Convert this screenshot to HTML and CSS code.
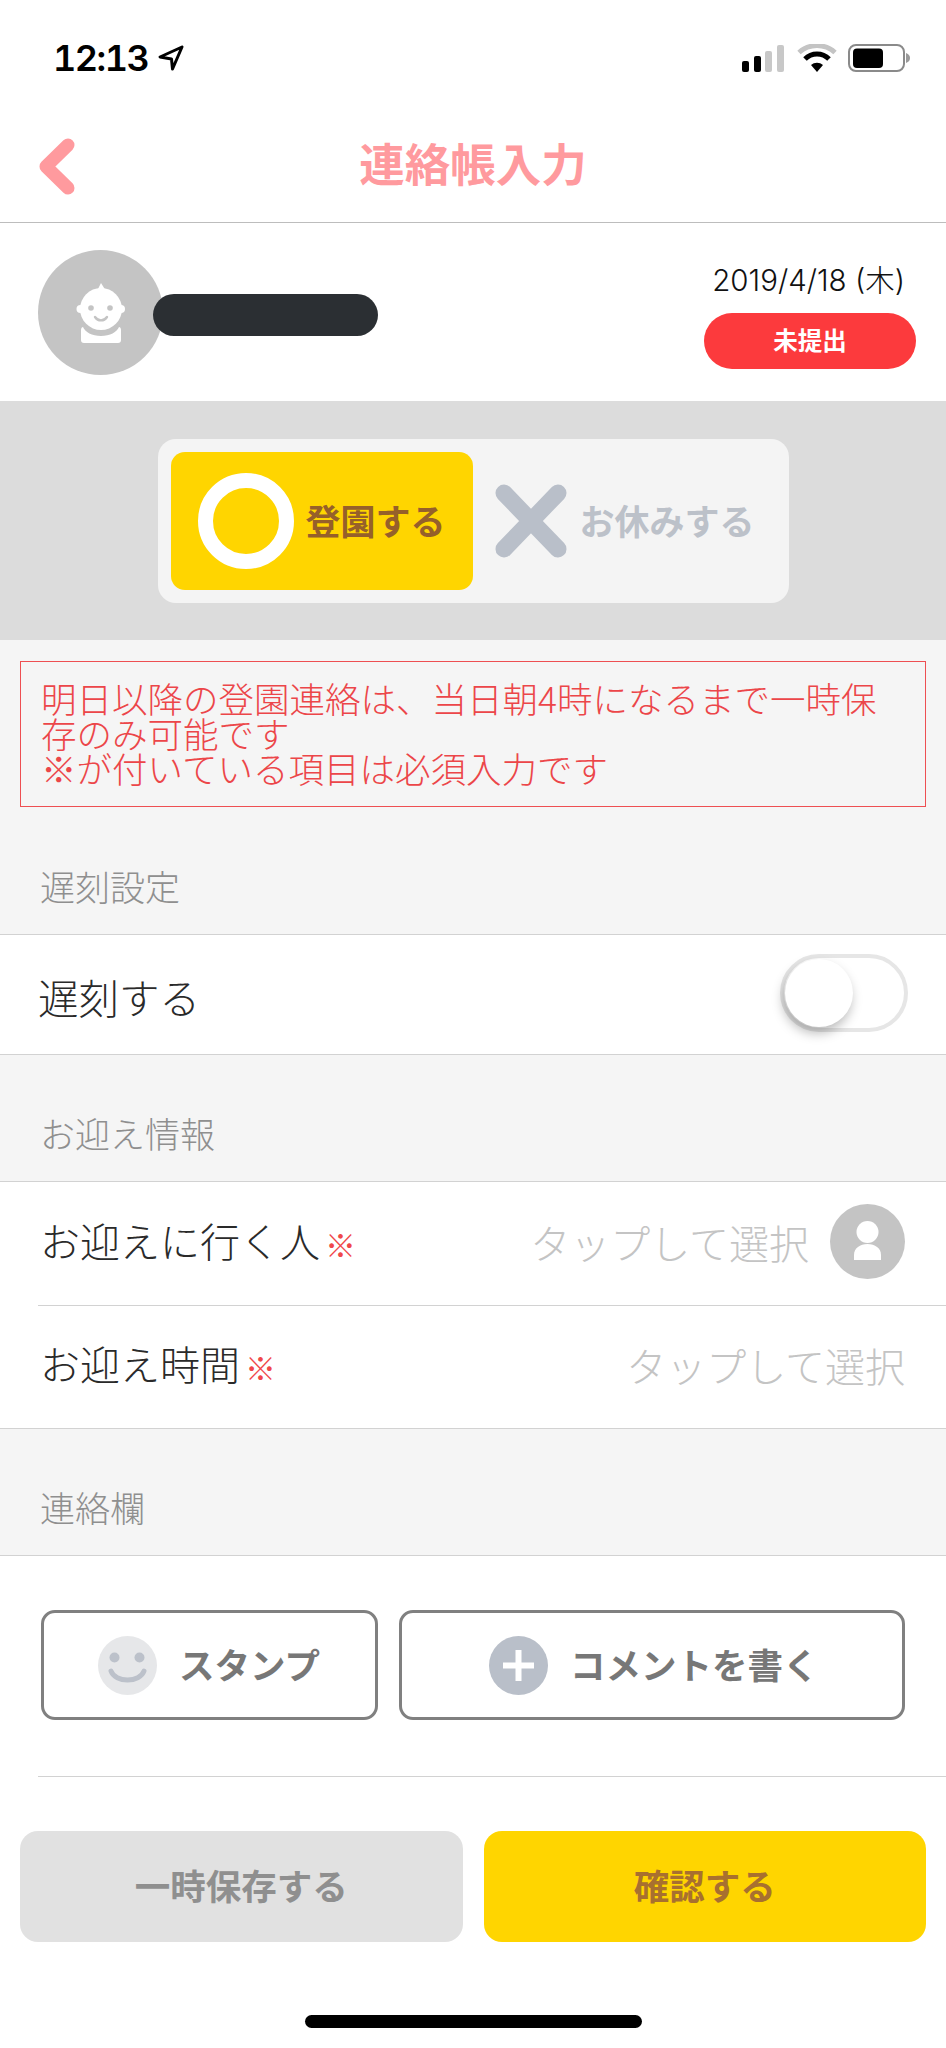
FILE: index.html
```html
<!DOCTYPE html>
<html lang="ja">
<head>
<meta charset="utf-8">
<title>連絡帳入力</title>
<link rel="stylesheet" href="styles.css">
</head>
<body>
<div class="page">
  <div class="status">
    <div class="time-wrap">
      <span class="time">12:13</span>
      <svg class="loc" width="28" height="28" viewBox="0 0 28 28"><path d="M25 3 3 13l11.500 2 1 10z" fill="none" stroke="#000" stroke-width="3" stroke-linejoin="round"/></svg>
    </div>
    <svg class="status-icons" width="170" height="28" viewBox="742 44 170 28">
      <rect x="742" y="61" width="7" height="11" rx="2" fill="#000"/>
      <rect x="754" y="56" width="7" height="16" rx="2" fill="#000"/>
      <rect x="765" y="51" width="7" height="21" rx="2" fill="#c8c8c8"/>
      <rect x="777" y="45" width="7" height="27" rx="2" fill="#c8c8c8"/>
      <path d="M799 52.500a27 27 0 0 1 36 0" fill="none" stroke="#c4c4c4" stroke-width="5"/>
      <path d="M805 59a17 17 0 0 1 24 0" fill="none" stroke="#000" stroke-width="5"/>
      <path d="M811 65a9 9 0 0 1 12 0l-6 7z" fill="#000"/>
      <rect x="849" y="45" width="55" height="26" rx="7" fill="none" stroke="#8a8a8a" stroke-width="2"/>
      <rect x="853" y="48.500" width="30" height="19.500" rx="4" fill="#000"/>
      <path d="M906 53c3 1 4 3 4 5s-1 4-4 5z" fill="#9a9a9a"/>
    </svg>
  </div>
  <header class="nav">
    <svg class="back" width="50" height="72" viewBox="0 0 50 72"><path d="M36 15 14 36.500 36 58" fill="none" stroke="#ff9a9e" stroke-width="13" stroke-linecap="round" stroke-linejoin="round"/></svg>
    <h1 class="nav-title">連絡帳入力</h1>
  </header>
  <section class="profile">
    <div class="avatar">
      <svg width="125" height="125" viewBox="0 0 125 125">
        <circle cx="62.500" cy="62.500" r="62.500" fill="#c4c4c4"/>
        <circle cx="42.500" cy="59" r="4" fill="#fff"/>
        <circle cx="83" cy="59" r="4" fill="#fff"/>
        <path d="M63 33l5 8h-9z" fill="#fff"/>
        <circle cx="63" cy="59" r="21" fill="#fff"/>
        <circle cx="53" cy="58" r="2.800" fill="#c4c4c4"/>
        <circle cx="72" cy="58" r="2.800" fill="#c4c4c4"/>
        <path d="M57 67c3 4.500 9 4.500 12 0" fill="none" stroke="#c4c4c4" stroke-width="2.400" stroke-linecap="round"/>
        <path d="M45 77c2 5 9 9 18 9s16-4 18-9c1 0 2 1 2 3v10c0 2-1 3-3 3H46c-2 0-3-1-3-3V80c0-2 1-3 2-3z" fill="#fff"/>
      </svg>
    </div>
    <div class="name-mask"></div>
    <div class="profile-meta">
      <div class="date">2019/4/18 (木)</div>
      <div class="badge"><span class="badge-text">未提出</span></div>
    </div>
  </section>
  <section class="attend-band">
    <div class="segment">
      <div class="seg-item seg-on">
        <span class="ring"></span>
        <span class="seg-label seg-label-on">登園する</span>
      </div>
      <div class="seg-item seg-off">
        <svg width="74" height="76" viewBox="0 0 74 76"><path d="M10 10l54 56M64 10 10 66" fill="none" stroke="#b9bfc9" stroke-width="17" stroke-linecap="round"/></svg>
        <span class="seg-label seg-label-off">お休みする</span>
      </div>
    </div>
  </section>
  <section class="notice-wrap">
    <div class="notice">明日以降の登園連絡は、当日朝4時になるまで一時保存のみ可能です<br>※が付いている項目は必須入力です</div>
  </section>
  <h2 class="sec-head sec-first">遅刻設定</h2>
  <div class="group">
    <div class="row row-late">
      <span class="row-label">遅刻する</span>
      <span class="toggle"><span class="knob"></span></span>
    </div>
  </div>
  <h2 class="sec-head">お迎え情報</h2>
  <div class="group">
    <div class="row row-pick row-divided">
      <span class="row-label">お迎えに行く人<span class="req">※</span></span>
      <span class="row-value">
        <span class="placeholder">タップして選択</span>
        <svg width="75" height="75" viewBox="0 0 75 75"><circle cx="37.500" cy="37.500" r="37.500" fill="#c4c4c4"/><ellipse cx="37.500" cy="28" rx="11" ry="11" fill="#fff"/><path d="M24 56V51c0-7 6-11 13.500-11S51 44 51 51v5z" fill="#fff"/></svg>
      </span>
    </div>
    <div class="row row-pick">
      <span class="row-label">お迎え時間<span class="req">※</span></span>
      <span class="placeholder">タップして選択</span>
    </div>
  </div>
  <h2 class="sec-head">連絡欄</h2>
  <div class="group group-open">
    <div class="contact-actions">
      <button class="outline-btn btn-stamp">
        <svg width="59" height="59" viewBox="0 0 59 59"><circle cx="29.500" cy="29.500" r="29.500" fill="#e6e7e9"/><circle cx="16.500" cy="21.500" r="5" fill="#bcc1ca"/><circle cx="41.500" cy="21.500" r="5" fill="#bcc1ca"/><path d="M13 35c4 12 29 12 33 0" fill="none" stroke="#bcc1ca" stroke-width="5" stroke-linecap="round"/></svg>
        <span class="btn-text">スタンプ</span>
      </button>
      <button class="outline-btn btn-comment">
        <svg width="59" height="59" viewBox="0 0 59 59"><circle cx="29.500" cy="29.500" r="29.500" fill="#b9bfc9"/><path d="M29.500 14v31M14 29.500h31" stroke="#fff" stroke-width="6"/></svg>
        <span class="btn-text">コメントを書く</span>
      </button>
    </div>
    <div class="inner-line"></div>
  </div>
  <footer class="footer">
    <div class="footer-btn btn-save">一時保存する</div>
    <div class="footer-btn btn-confirm">確認する</div>
  </footer>
  <div class="home-wrap"><div class="home-bar"></div></div>
</div>
</body>
</html>
```

FILE: styles.css
```css
* { box-sizing: border-box; }
html, body { margin: 0; padding: 0; background: #fff; }
body { font-family: "Noto Sans CJK JP", "Noto Sans", sans-serif; }
.page { width: 946px; height: 2048px; display: flex; flex-direction: column; background: #fff; overflow: hidden; }

.status { height: 100px; display: flex; justify-content: space-between; align-items: flex-start; padding: 44px 34px 0 53px; flex: none; }
.time-wrap { display: flex; align-items: center; gap: 9px; height: 28px; }
.time { font-family: Inter, Roboto, sans-serif; font-weight: 600; font-size: 36px; line-height: 28px; color: #000; font-variant-numeric: tabular-nums; letter-spacing: -1.5px; }

.nav { height: 123px; flex: none; position: relative; display: flex; align-items: center; justify-content: center; border-bottom: 1px solid #bdbdbd; padding-top: 2px; }
.back { position: absolute; left: 32px; top: 30px; }
.nav-title { margin: 0; font-size: 45.500px; line-height: 60px; font-weight: 700; color: #ff9a9e; }

.profile { height: 178px; flex: none; display: flex; align-items: flex-start; padding: 27px 30px 0 38px; }
.avatar { width: 125px; height: 125px; flex: none; }
.avatar svg { display: block; }
.name-mask { width: 225px; height: 42px; margin: 44px 0 0 -10px; background: #2b2f33; border-radius: 21px; position: relative; flex: none; }
.profile-meta { margin-left: auto; display: flex; flex-direction: column; align-items: flex-end; }
.date { font-family: Inter, "Noto Sans CJK JP", sans-serif; font-weight: 300; font-size: 29.500px; line-height: 36px; color: #111; margin: 12px 11px 0 0; white-space: nowrap; }
.badge { width: 212px; height: 56px; margin-top: 15px; border-radius: 28px; background: #fc3a3d; color: #fff; font-size: 24.500px; font-weight: 700; display: flex; align-items: center; justify-content: center; }
.badge-text { padding-bottom: 4px; }

.attend-band { height: 239px; flex: none; background: #dcdcdc; display: flex; justify-content: center; padding-top: 38px; }
.segment { width: 631px; height: 164px; background: #f4f4f4; border-radius: 18px; display: flex; padding: 13px; }
.seg-item { display: flex; align-items: center; height: 138px; }
.seg-on { width: 302px; background: #ffd500; border-radius: 14px; padding-left: 27px; gap: 12px; }
.ring { width: 96px; height: 96px; border: 15px solid #fff; border-radius: 50%; flex: none; }
.seg-off { padding-left: 21px; gap: 12px; }
.seg-label { font-size: 35px; font-weight: 700; white-space: nowrap; padding-bottom: 4px; }
.seg-label-on { color: #96602a; }
.seg-label-off { color: #bcc1c9; }

.notice-wrap { background: #f5f5f5; padding: 21px 20px 0; flex: none; height: 171px; }
.notice { height: 146px; border: 1px solid #ee4f52; padding: 18px 40px 0 20px; color: #ec4649; font-size: 35.500px; line-height: 35px; font-weight: 300; }

.sec-head { margin: 0; flex: none; height: 127px; background: #f5f5f5; border-bottom: 1px solid #d2d2d2; color: #8f8f8f; font-size: 35px; font-weight: 300; line-height: 46px; padding: 55px 0 0 40px; }
.sec-first { height: 124px; padding-top: 52px; }
.group { background: #fff; flex: none; border-bottom: 1px solid #d2d2d2; }
.group-open { border-bottom: 0; height: 275px; }
.row { display: flex; align-items: center; justify-content: space-between; }
.row-late { height: 119px; padding: 0 38px 0 38px; }
.row-late .row-label { font-size: 40.500px; padding-top: 4px; }
.row-label { font-size: 40px; line-height: 54px; color: #2a2a2a; font-weight: 300; }
.req { color: #f0474a; font-size: 31px; margin-left: 5px; }
.toggle { width: 128px; height: 78px; border: 4px solid #e6e6e6; border-radius: 39px; position: relative; flex: none; margin-bottom: 3px; }
.knob { position: absolute; left: 1px; top: 1px; width: 68px; height: 68px; border-radius: 50%; background: #fff; box-shadow: -2px 6px 12px rgba(0,0,0,0.28); }
.row-pick { height: 122px; padding: 0 41px 4px 40px; }
.row-divided { height: 124px; margin-left: 38px; padding-left: 2px; border-bottom: 1px solid #d2d2d2; }
.row-value { display: flex; align-items: center; gap: 21px; }
.row-value svg { display: block; }
.placeholder { font-size: 40px; line-height: 54px; color: #c4c4c4; font-weight: 300; }

.contact-actions { display: flex; gap: 21px; padding: 54px 41px 0; height: 220px; }
.outline-btn { height: 110px; background: #fff; border: 3px solid #808080; border-radius: 14px; display: flex; align-items: center; font: inherit; padding: 0; color: #777; font-weight: 700; font-size: 35.500px; }
.btn-text { padding-bottom: 4px; }
.btn-stamp { width: 337px; padding-left: 54px; gap: 22px; }
.btn-comment { width: 506px; padding-left: 87px; gap: 22px; }
.inner-line { margin-left: 38px; border-top: 1px solid #d2d2d2; }

.footer { flex: none; display: flex; gap: 21px; padding: 0 20px; height: 111px; }
.footer-btn { flex: 1; height: 111px; border-radius: 18px; font-size: 35.500px; font-weight: 700; display: flex; align-items: center; justify-content: center; padding-bottom: 4px; }
.btn-save { background: #e1e1e1; color: #8f8f8f; }
.btn-confirm { background: #ffd500; color: #a8702f; }

.home-wrap { flex: 1; display: flex; justify-content: center; padding-top: 73px; }
.home-bar { width: 337px; height: 13px; border-radius: 7px; background: #000; }
```
